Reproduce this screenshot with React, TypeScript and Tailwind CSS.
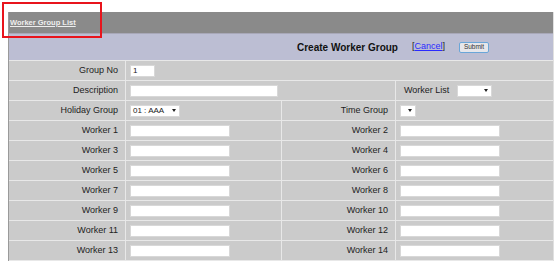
import React from 'react';

const font = { fontFamily: '"Liberation Sans", Arial, sans-serif' };

function Label({ children }: { children: React.ReactNode }) {
  return (
    <div className="bg-[#cbcbcb] flex items-center justify-end pr-[7px] text-[9px] text-[#222]">
      {children}
    </div>
  );
}

function TextBox({ w, value = '' }: { w: string; value?: string }) {
  return (
    <div className={`${w} h-[12px] bg-white border border-[#d8d8d8] text-[8px] leading-[10px] pl-[2px] text-[#222]`}>
      {value}
    </div>
  );
}

function Select({ w, value = '' }: { w: string; value?: string }) {
  return (
    <div className={`${w} h-[12px] bg-white border border-[#d8d8d8] flex items-center justify-between pl-[2px] pr-[3px] text-[8px] text-[#222]`}>
      <span>{value}</span>
      <span className="w-0 h-0 border-l-[2.5px] border-r-[2.5px] border-t-[3px] border-l-transparent border-r-transparent border-t-[#222]" />
    </div>
  );
}

function Cell({ children, span = '' }: { children?: React.ReactNode; span?: string }) {
  return <div className={`bg-[#cbcbcb] flex items-center pl-[4px] ${span}`}>{children}</div>;
}

export default function App() {
  const workers = [1, 3, 5, 7, 9, 11, 13];
  return (
    <div className="relative w-[554px] h-[261px] bg-white overflow-hidden" style={font}>
      <div className="pt-[12px] pl-[8px]">
        <div className="border-l border-[#9a9a9a] border-r border-r-[#e0e0e0] w-[546px]">
          <div className="h-[21px] bg-[#8a8a8a] flex items-center pl-[1px]">
            <span className="text-[7.5px] font-bold text-[#eeeeee] underline">Worker Group List</span>
          </div>
          <div className="h-[27px] bg-[#bcbed3] border-t border-[#a8a8b8] flex items-center">
            <span className="ml-[288px] text-[10px] font-bold text-[#111]">Create Worker Group</span>
            <span className="ml-[14px] text-[9px] text-[#222]">
              [<span className="text-[#2a2aff] underline">Cancel</span>]
            </span>
            <span className="ml-[14px] w-[30px] h-[11px] border border-[#6aa6d8] rounded-[2px] bg-[#e6e6ea] flex items-center justify-center text-[6.5px] text-[#333]">
              Submit
            </span>
          </div>
          <div className="grid grid-cols-[116px_155px_113px_1fr] auto-rows-[19px] gap-px bg-[#e8e8e8] pt-px">
            <Label>Group No</Label>
            <Cell span="col-span-3">
              <TextBox w="w-[25px]" value="1" />
            </Cell>

            <Label>Description</Label>
            <Cell span="col-span-2">
              <TextBox w="w-[148px]" />
            </Cell>
            <div className="bg-[#cbcbcb] flex items-center pl-[8px] text-[9px] text-[#222]">
              <span>Worker List</span>
              <div className="ml-[8px]">
                <Select w="w-[35px]" />
              </div>
            </div>

            <Label>Holiday Group</Label>
            <Cell>
              <Select w="w-[50px]" value="01 : AAA" />
            </Cell>
            <Label>Time Group</Label>
            <Cell>
              <Select w="w-[16px]" />
            </Cell>

            {workers.map((n) => (
              <React.Fragment key={n}>
                <Label>Worker {n}</Label>
                <Cell>
                  <TextBox w="w-[100px]" />
                </Cell>
                <Label>Worker {n + 1}</Label>
                <Cell>
                  <TextBox w="w-[100px]" />
                </Cell>
              </React.Fragment>
            ))}
            <div className="bg-[#cbcbcb] col-span-4" />
          </div>
        </div>
      </div>
      <div className="absolute left-[2px] top-[2px] w-[100px] h-[36px] border-[2.5px] border-[#e8141c]" />
    </div>
  );
}
